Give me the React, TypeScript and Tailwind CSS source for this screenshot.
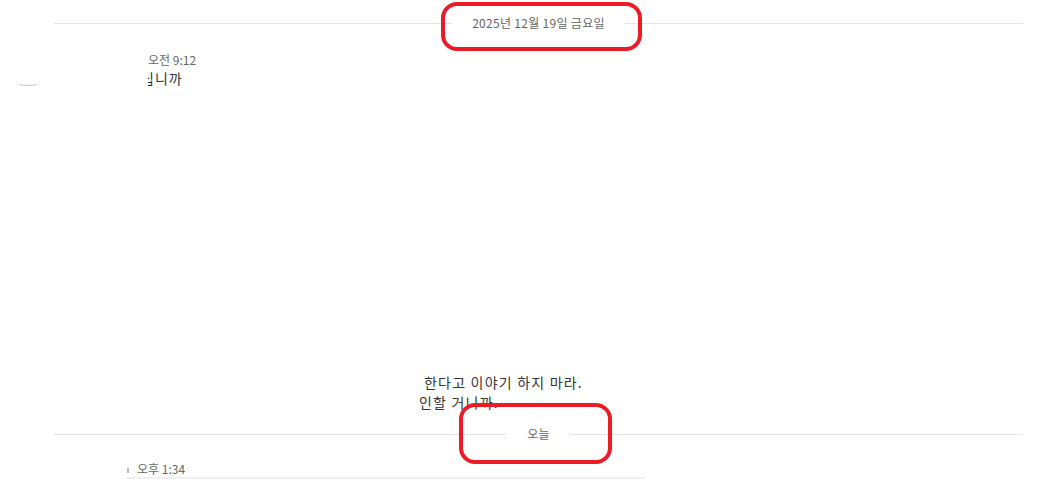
const font = { fontFamily: '"Noto Sans CJK KR", "Noto Sans", sans-serif' };

function DateDivider({ label, gap }: { label: string; gap: string }) {
  return (
    <div className="flex h-4 items-center ml-[54px] w-[969px]">
      <div className="flex-1 h-px bg-[#e3e3e3]" />
      <span className={`${gap} text-[12px] leading-4 tracking-[0.3px] text-[#666]`}>{label}</span>
      <div className="flex-1 h-px bg-[#e3e3e3]" />
    </div>
  );
}

export default function App() {
  return (
    <div className="relative w-[1039px] h-[479px] overflow-hidden bg-white" style={font}>
      <div className="flex flex-col pt-[15px]">
        <DateDivider label="2025년 12월 19일 금요일" gap="px-5" />

        {/* message 1 */}
        <div className="flex mt-[21px]">
          <div className="w-[148px] pl-[18px] pt-[31px]">
            <svg width="20" height="4" viewBox="0 0 20 4">
              <path d="M1 1.5 Q10 3.5 19 1.5" stroke="#c8c8c8" strokeWidth="1.2" fill="none" />
            </svg>
          </div>
          <div className="flex flex-col">
            <span className="text-[12px] leading-4 text-[#666]">오전 9:12</span>
            <div className="w-[60px] overflow-hidden">
              <span className="block -ml-[7px] text-[14px] leading-5 tracking-[1px] text-[#333] whitespace-nowrap">십니까</span>
            </div>
          </div>
        </div>

        {/* message 2 */}
        <div className="ml-[419px] mt-[284px] flex flex-col text-[14px] leading-5 tracking-[1.2px] text-[#333]">
          <span className="pl-[5px]">한다고 이야기 하지 마라.</span>
          <span>인할 거니까.</span>
        </div>

        <div className="mt-[14px]">
          <DateDivider label="오늘" gap="px-[20px]" />
        </div>

        {/* message 3 */}
        <div className="flex items-center mt-[19px] ml-[127px]">
          <div className="w-[2px] h-[5px] bg-[#bbb] mt-[2px]" />
          <span className="ml-[8px] text-[12px] leading-4 text-[#666]">오후 1:34</span>
        </div>
        <div className="ml-[127px] w-[518px] h-[3px] bg-[#f0f0f0]" />
      </div>

      {/* red annotations */}
      <div className="absolute left-[441px] top-[2px] w-[201px] h-[49px] rounded-[16px] border-4 border-[#ed1c24]" />
      <div className="absolute left-[459px] top-[403px] w-[153px] h-[61px] rounded-[16px] border-4 border-[#ed1c24]" />
    </div>
  );
}
